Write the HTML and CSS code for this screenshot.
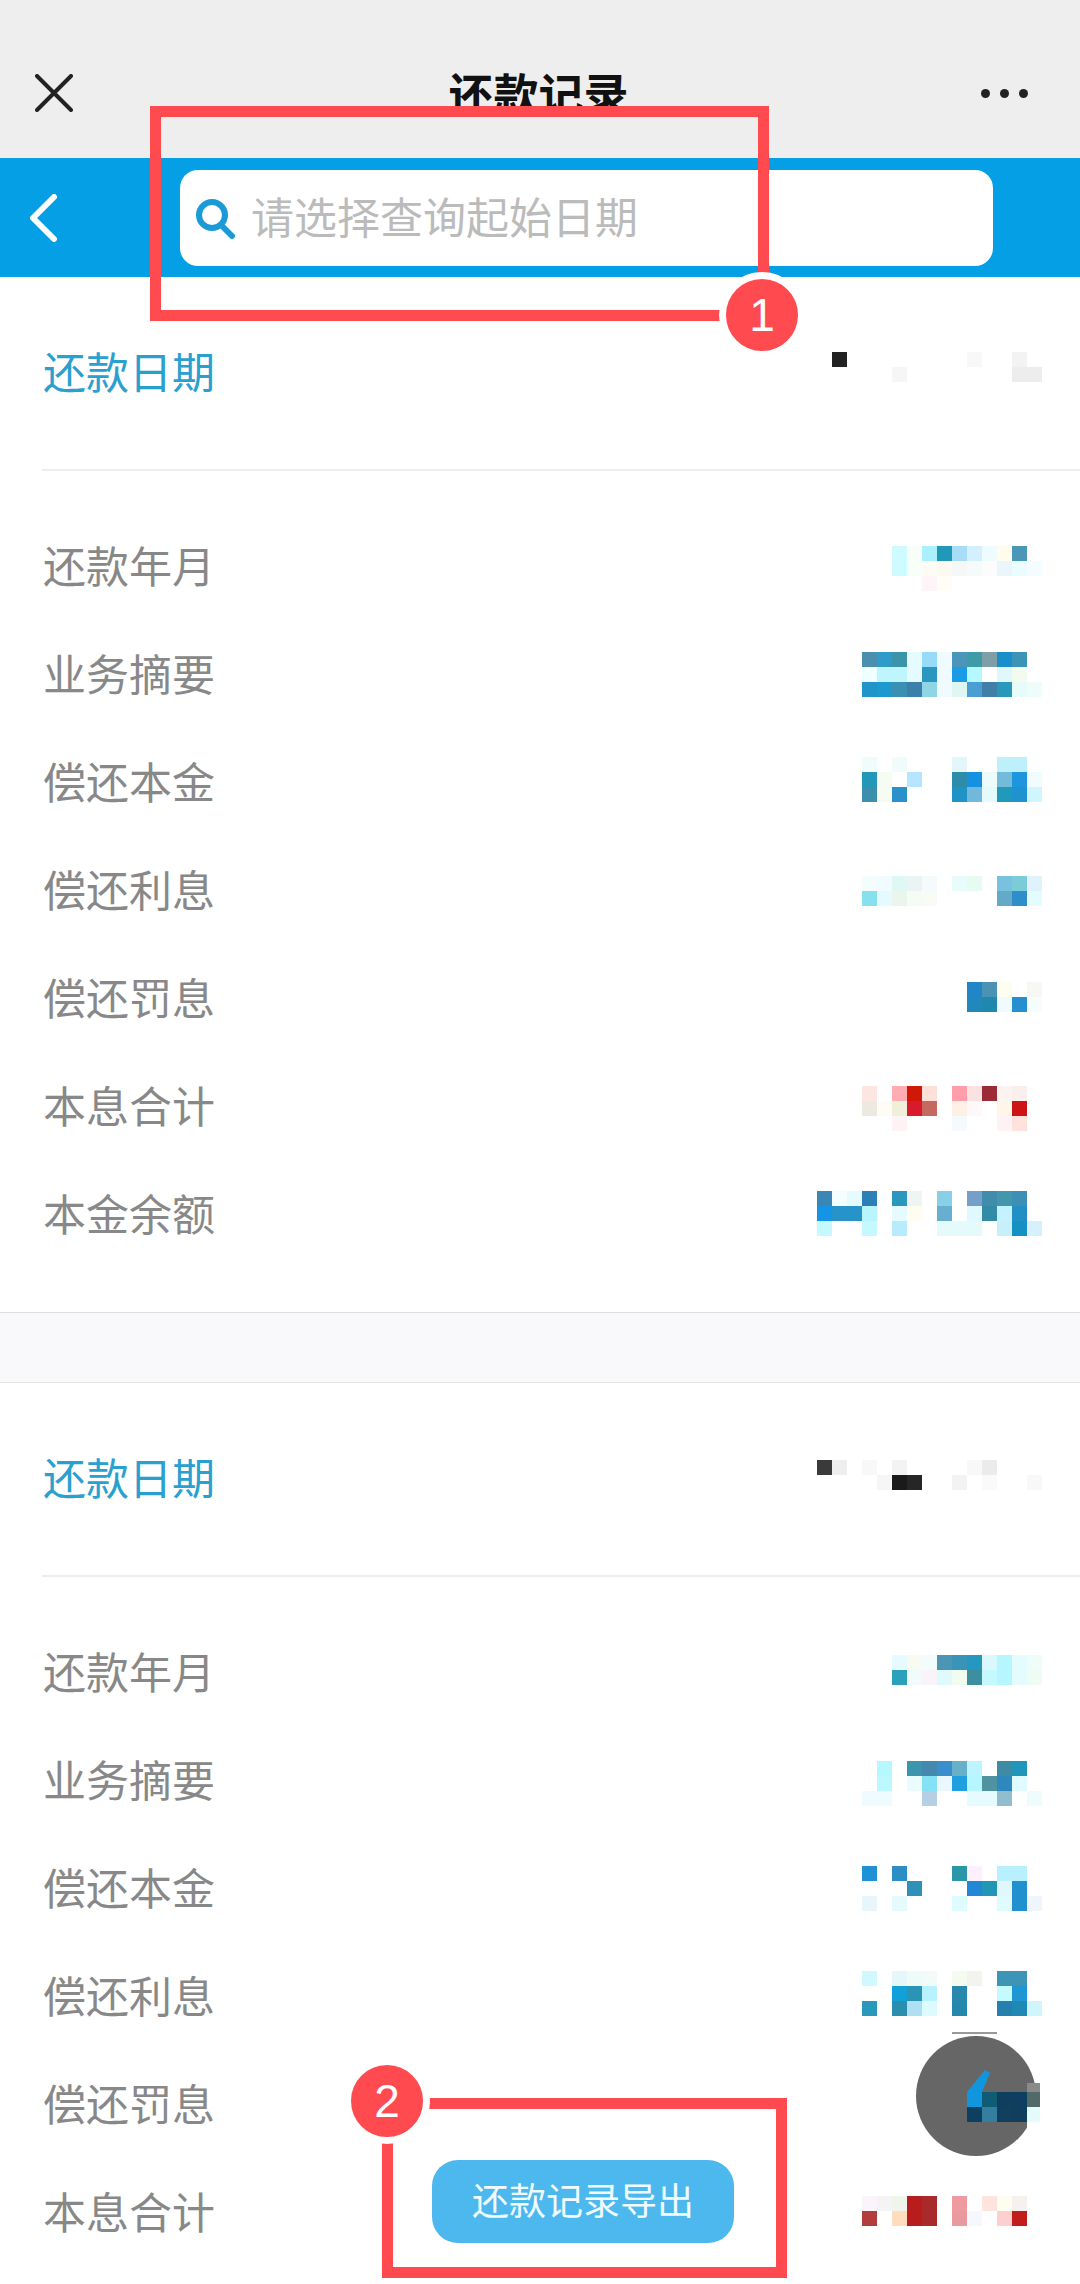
FILE: index.html
```html
<!DOCTYPE html>
<html lang="zh-CN">
  <head>
    <meta charset="UTF-8" />
    <title>还款记录</title>
    <link rel="stylesheet" href="styles.css">
  </head>
  <body>
    <header class="topbar">
      <svg class="close-icon" width="38" height="38" viewBox="0 0 38 38">
        <path d="M2 2 L36 36 M36 2 L2 36" />
      </svg>
      <h1 class="title">还款记录</h1>
      <div class="dots"><span></span><span></span><span></span></div>
    </header>

    <div class="searchbar">
      <svg class="back-icon" width="30" height="48" viewBox="0 0 30 48">
        <path d="M26 3 L5 24 L26 45" />
      </svg>
      <div class="searchbox">
        <svg class="search-icon" width="42" height="42" viewBox="0 0 42 42">
          <circle cx="18" cy="18" r="13" />
          <path d="M27 28 L38 39" />
        </svg>
        <span class="placeholder">请选择查询起始日期</span>
      </div>
    </div>

    <section class="record">
      <div class="date-row">
        <span class="date-label">还款日期</span>
        <svg class="mosaic" width="225" height="60" viewBox="0 0 225 60" data-cells="date1" data-top="9"></svg>
      </div>
      <div class="rows">
        <div class="row"><span>还款年月</span><svg class="mosaic" width="225" height="60" viewBox="0 0 225 60" data-cells="a1" data-top="9"></svg></div>
        <div class="row"><span>业务摘要</span><svg class="mosaic" width="225" height="60" viewBox="0 0 225 60" data-cells="a2" data-top="7"></svg></div>
        <div class="row"><span>偿还本金</span><svg class="mosaic" width="225" height="60" viewBox="0 0 225 60" data-cells="a3" data-top="4"></svg></div>
        <div class="row"><span>偿还利息</span><svg class="mosaic" width="225" height="60" viewBox="0 0 225 60" data-cells="a4" data-top="15"></svg></div>
        <div class="row"><span>偿还罚息</span><svg class="mosaic" width="225" height="60" viewBox="0 0 225 60" data-cells="a5" data-top="13"></svg></div>
        <div class="row"><span>本息合计</span><svg class="mosaic" width="225" height="60" viewBox="0 0 225 60" data-cells="a6" data-top="9"></svg></div>
        <div class="row"><span>本金余额</span><svg class="mosaic" width="225" height="60" viewBox="0 0 225 60" data-cells="a7" data-top="6"></svg></div>
      </div>
    </section>

    <div class="separator"></div>

    <section class="record">
      <div class="date-row">
        <span class="date-label">还款日期</span>
        <svg class="mosaic" width="225" height="60" viewBox="0 0 225 60" data-cells="date2" data-top="11"></svg>
      </div>
      <div class="rows">
        <div class="row"><span>还款年月</span><svg class="mosaic" width="225" height="60" viewBox="0 0 225 60" data-cells="b1" data-top="12"></svg></div>
        <div class="row"><span>业务摘要</span><svg class="mosaic" width="225" height="60" viewBox="0 0 225 60" data-cells="b2" data-top="10"></svg></div>
        <div class="row"><span>偿还本金</span><svg class="mosaic" width="225" height="60" viewBox="0 0 225 60" data-cells="b3" data-top="7"></svg></div>
        <div class="row"><span>偿还利息</span><svg class="mosaic" width="225" height="60" viewBox="0 0 225 60" data-cells="b4" data-top="4"></svg></div>
        <div class="row"><span>偿还罚息</span></div>
        <div class="row"><span>本息合计</span><svg class="mosaic" width="225" height="60" viewBox="0 0 225 60" data-cells="b6" data-top="13"></svg></div>
      </div>
    </section>

    <!-- floating button with the mosaic smeared over it -->
    <svg class="float-btn" width="135" height="130" viewBox="905 2030 135 130">
      <rect x="952" y="2032" width="45" height="2" fill="#999" />
      <circle cx="976" cy="2096" r="60" fill="#666" />
      <path d="M967 2092 L985 2070 L990 2073 L982 2092 Z" fill="#1196dd" />
      <rect x="967" y="2092" width="15" height="15" fill="#1196dd" />
      <rect x="982" y="2092" width="15" height="15" fill="#0f5d75" />
      <rect x="997" y="2092" width="15" height="15" fill="#103f5e" />
      <rect x="1012" y="2092" width="15" height="15" fill="#0f3f60" />
      <rect x="1027" y="2092" width="13" height="15" fill="#52696a" />
      <rect x="1027" y="2083" width="13" height="9" fill="#8a8a8a" />
      <rect x="967" y="2107" width="15" height="15" fill="#0d4060" />
      <rect x="982" y="2107" width="15" height="15" fill="#347f9f" />
      <rect x="997" y="2107" width="15" height="15" fill="#123f5e" />
      <rect x="1012" y="2107" width="15" height="15" fill="#0f3f5c" />
      <rect x="1027" y="2107" width="13" height="15" fill="#e5fafa" />
      <rect x="1027" y="2122" width="13" height="16" fill="#fff" />
    </svg>

    <div class="mark mark-search"></div>
    <div class="badge badge-one">1</div>

    <div class="mark mark-export"></div>
    <div class="badge badge-two">2</div>
    <button class="export-btn"><span>还款记录导出</span></button>

    <script src="mosaic.js"></script>
  </body>
</html>
```

FILE: styles.css
```css
html,
body {
  height: 2284px;
  margin: 0;
  overflow: hidden;
}

body {
  position: relative;
  font-family: "Noto Sans CJK SC", "Noto Sans", sans-serif;
  background: #fff;
}

.topbar {
  display: grid;
  grid-template-columns: 1fr auto 1fr;
  align-items: center;
  box-sizing: border-box;
  height: 158px;
  padding: 38px 52px 10px 35px;
  background: #eee;
}

.close-icon path {
  fill: none;
  stroke: #222;
  stroke-width: 4;
  stroke-linecap: round;
}

.title {
  margin: 0 0 0 14px;
  font-size: 45px;
  font-weight: 700;
  line-height: 60px;
  color: #111;
}

.dots {
  display: flex;
  justify-content: flex-end;
  gap: 10px;
}

.dots span {
  width: 9px;
  height: 9px;
  border-radius: 50%;
  background: #222;
}

.searchbar {
  display: flex;
  align-items: center;
  box-sizing: border-box;
  height: 119px;
  padding: 0 87px 0 28px;
  background: #059fe5;
}

.back-icon {
  margin-right: 122px;
}

.back-icon path {
  fill: none;
  stroke: #fff;
  stroke-width: 6;
  stroke-linecap: round;
  stroke-linejoin: round;
}

.searchbox {
  flex: 1;
  display: flex;
  align-items: center;
  gap: 15px;
  height: 96px;
  padding-left: 14px;
  border-radius: 18px;
  background: #fff;
}

.search-icon circle,
.search-icon path {
  fill: none;
  stroke: #1a9bd7;
  stroke-width: 6;
  stroke-linecap: round;
}

.placeholder {
  margin-bottom: 6px;
  font-size: 43px;
  line-height: 60px;
  color: #bbb;
}

.date-row {
  display: flex;
  align-items: center;
  justify-content: space-between;
  box-sizing: border-box;
  height: 194px;
  margin-left: 42px;
  padding-right: 38px;
  border-bottom: 2px solid #eee;
}

.date-label {
  margin-left: 1px;
  margin-bottom: 6px;
  font-size: 43px;
  color: #2aa0d0;
}

.rows {
  padding: 42px 38px 43px 43px;
}

.row {
  display: flex;
  align-items: center;
  justify-content: space-between;
  height: 108px;
  font-size: 43px;
  color: #888;
}

.row span {
  margin-bottom: 6px;
}

.mosaic {
  display: block;
}

.separator {
  box-sizing: border-box;
  height: 71px;
  background: #f9f9fc;
  border-top: 1px solid #ddd;
  border-bottom: 1px solid #e4e4e4;
}

.float-btn {
  position: absolute;
  left: 905px;
  top: 2030px;
}

.mark {
  position: absolute;
  box-sizing: border-box;
  border: 11px solid #ff4a4f;
}

.mark-search {
  left: 150px;
  top: 106px;
  width: 619px;
  height: 215px;
}

.mark-export {
  left: 382px;
  top: 2098px;
  width: 405px;
  height: 180px;
}

.badge {
  position: absolute;
  box-sizing: border-box;
  display: flex;
  align-items: center;
  justify-content: center;
  width: 86px;
  height: 86px;
  border: 7px solid #fff;
  border-radius: 50%;
  background: #ff4a4f;
  font-family: "Liberation Sans", sans-serif;
  font-size: 46px;
  color: #fff;
}

.badge-one {
  left: 719px;
  top: 272px;
}

.badge-two {
  left: 344px;
  top: 2058px;
}

.export-btn {
  position: absolute;
  left: 432px;
  top: 2160px;
  width: 302px;
  height: 83px;
  padding: 0 0 5px;
  border: none;
  border-radius: 26px;
  background: #4cb8ee;
  font-family: inherit;
  font-size: 37px;
  color: #f0fbff;
}
```

FILE: mosaic.js
```js
// blurred-out values: each row is "column:colour", cells are 15px square
const cells = {
  date1: ["1:222222 10:f8f8f8 13:f3f3f3", "5:f6f6f6 13:ededed 14:ededed"],
  a1: [
    "5:cdfbff 6:f8fff8 7:aaf0ff 8:2198b8 9:a8def5 10:d4f0ff 11:eefcff 12:fffcee 13:4a97b7",
    "5:cdfbff 6:f8fff8 7:fdfbf5 8:fdf8f0 9:f6f8f8 10:f5fbfb 11:fdfcfc 12:eaf6fb 13:eafcff 14:f3fdff",
    "7:fdf5f8 8:fffdf5"
  ],
  a2: [
    "3:4a8fad 4:2f9bc8 5:3a95ab 6:e5fbff 7:96dcfa 8:effbff 9:4a96bb 10:3f9ba8 11:7f9fa8 12:1a8dcb 13:3d93b7",
    "3:f0ffff 4:bff5ff 5:bff5ff 6:e5fbff 7:2b97c1 8:effbff 9:1a9be5 10:b5f8ff 12:e0f8fb 13:f3fbef",
    "3:2295c8 4:1e99cf 5:3a8fb3 6:3a80ab 7:90d5e5 8:effbff 9:dff6f3 10:4a9ed1 11:3f7fa8 12:2b97bb 13:e7fbfb 14:eefcfa"
  ],
  a3: [
    "3:f0fbfb 5:f0fbfb 9:e3f6fb 12:bdf0fa 13:bdf0fa",
    "3:2297b8 4:f6fcf4 6:b5e5ff 9:2e8cab 10:1491e1 11:ecfcfb 12:73bcd9 13:1d96dd 14:f0fcfe",
    "3:3a8fad 4:f6fcf4 5:2b91cb 9:1f93c5 10:72b8dd 11:e5fbfb 12:2099bb 13:1f93cf 14:cff6ff"
  ],
  a4: [
    "3:f3fdfc 4:f0fcff 5:e0f8f5 6:eaf4f2 7:f5fbfd 9:e8fcfb 10:e6fcf3 12:78c2df 13:7accd9 14:e0f3fc",
    "3:87e0ee 4:e5faff 5:ebf5ec 6:f5fbf5 7:f8fcf5 12:64aac8 13:2e8ec9 14:e3fcff"
  ],
  a5: [
    "10:2086c8 11:4b93b5 12:fffcf0 14:f7f7f3",
    "10:2288bb 11:2088af 12:effbff 13:2590cf 14:f5fdff"
  ],
  a6: [
    "3:fde5e2 5:ffacb2 6:d01808 7:fde0d8 9:ff9daa 10:fbe2e2 11:9b2c35 12:fbf3f0 13:fbefee",
    "3:ebe9e0 4:fdfdf5 5:f0efdc 6:d81a2c 7:c46860 9:fff0e5 10:fff8fb 12:fff5e8 13:cc1414",
    "5:fff3f5 9:f5fafc 12:fdf3f5 13:ffe2dd"
  ],
  a7: [
    "0:3a87b5 1:f5feff 2:e5fbfd 3:2d7fb8 5:2a97bf 6:eef5f4 8:88d0e5 10:749fc8 11:418bad 12:4396ab 13:3d8fb5",
    "0:1594e5 1:2793c8 2:2793c8 3:b8f5ff 5:e5fbff 6:fffdf0 8:68aed1 10:e0f8ff 11:338ba8 12:c5f2ff 13:2290c5",
    "0:c5f8ff 3:c5f8ff 5:b8ebfc 8:e5fbfb 9:e5fbfb 10:e5fbfb 12:c8f0fb 13:1490c5 14:d8f0fb"
  ],
  date2: [
    "0:3a3a3a 1:eeeeee 3:f8f8f8 5:f3f3f3 10:f8f8f8 11:ebebeb",
    "4:f6f6f6 5:1a1a1a 6:262626 9:f3f3f3 11:fafafa 14:f8f8f8"
  ],
  b1: [
    "5:e5fbff 6:f8fcf0 7:f3fcfd 8:4d96b3 9:3a94b7 10:2598bf 11:dcf8ff 12:b5f6ff 13:e5fcff 14:eefcfa",
    "5:2ba0bb 6:f0fbfb 7:f9f4f9 8:e0f9fd 9:f0fcf0 10:3d8f9f 11:c5f8ff 12:b5f6ff 13:e5fcff 14:eefcf3"
  ],
  b2: [
    "4:b5f8ff 6:3d94ad 7:4488b0 8:3a8ecb 9:68afc8 10:bcf5ff 12:3d8ba5 13:2096bb",
    "4:bdf8ff 6:eafcff 7:85e2f5 8:eaf8fd 9:1f9fe0 10:b5f6ff 11:4f93a0 12:2f88bd 13:e0fbff",
    "3:f0fbff 4:f0fbff 7:b5d0e5 10:e5fbff 11:e5fbff 12:92bdcc 14:effcfc"
  ],
  b3: [
    "3:1f91d5 5:2b8fc5 9:2a97a8 10:fbf0fb 12:b8f0ff 13:b8f0ff",
    "6:3091b8 10:2088d5 11:2196b5 12:e0f8fc 13:2090cf",
    "3:e8f5fb 5:e5fbfb 9:defbff 12:e0fbfd 13:2090cf 14:eef5fc"
  ],
  b4: [
    "3:d0f8ff 5:e5f7fb 6:eefbf8 7:f3fbf8 9:f5fbef 10:f3f3f0 12:3d94b5 13:3d94b5",
    "5:12a0d8 6:2994b5 7:b8f2ff 9:2b88ad 12:c5faff 13:1f97d5",
    "3:2a97bd 5:2a8fae 6:afdff5 7:dcfbff 9:2488ad 12:2680ad 13:1f88b5 14:cff6ff"
  ],
  b6: [
    "3:fbf5fb 4:f5f3f3 5:f0f5ec 6:b81c1c 7:a82a2a 9:ee9aa0 11:fde5de 12:fdfdf0 13:f5f1ee",
    "3:b33c3c 5:ffddbc 6:b81c1c 7:a82a2a 9:e89a9f 10:f5f8fc 12:ffcfd0 13:c21c1c"
  ]
};

document.querySelectorAll(".mosaic").forEach(function (svg) {
  const top = Number(svg.dataset.top);
  cells[svg.dataset.cells].forEach(function (row, rowIndex) {
    row.split(" ").forEach(function (cell) {
      const [col, colour] = cell.split(":");
      const rect = document.createElementNS("http://www.w3.org/2000/svg", "rect");
      rect.setAttribute("x", col * 15);
      rect.setAttribute("y", top + rowIndex * 15);
      rect.setAttribute("width", 15);
      rect.setAttribute("height", 15);
      rect.setAttribute("fill", "#" + colour);
      svg.appendChild(rect);
    });
  });
});
```
